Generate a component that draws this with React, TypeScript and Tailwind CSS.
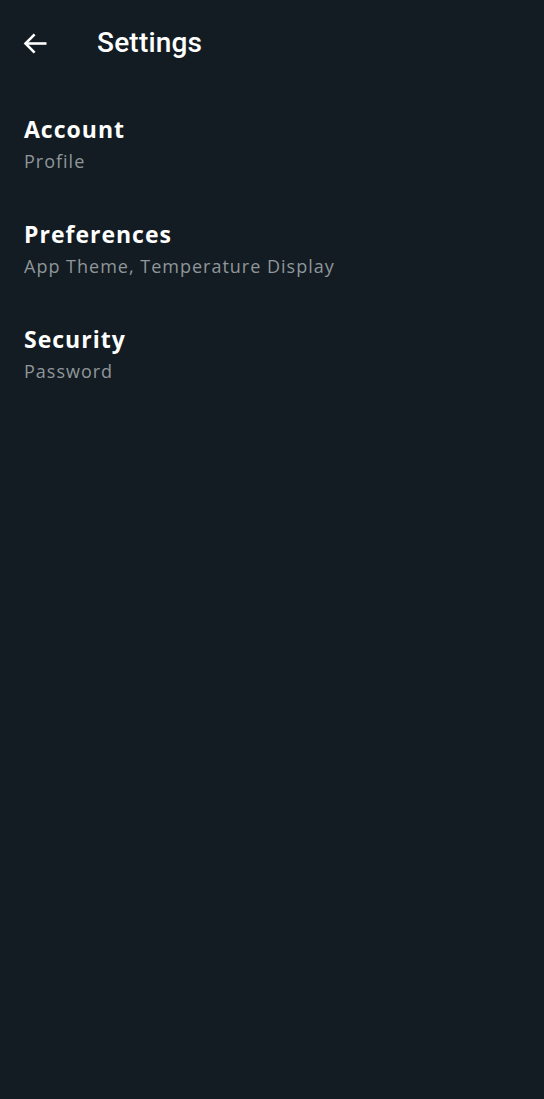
// ─── Data ─────────────────────────────────────────────────────────────────────

const sections = [
  { title: 'Account', subtitle: 'Profile' },
  { title: 'Preferences', subtitle: 'App Theme, Temperature Display' },
  { title: 'Security', subtitle: 'Password' },
]

// ─── Icons ────────────────────────────────────────────────────────────────────

function BackArrow() {
  return (
    <svg width="24" height="23" viewBox="0 0 24 23" fill="none" stroke="white" strokeWidth="2.6" strokeLinejoin="miter">
      <path d="M23.5 11.5H2.5" />
      <path d="M11.6 2.4L2.5 11.5L11.6 20.6" />
    </svg>
  )
}

// ─── Main Component ───────────────────────────────────────────────────────────

export default function App() {
  return (
    <div className="min-h-[1099px] w-full bg-[#121c22] text-white">
      {/* Top bar */}
      <div className="flex h-[86px] items-center pl-[23px] pr-6">
        <BackArrow />
        <h1 className="ml-[50px] text-[28px] font-medium font-['Roboto',sans-serif] leading-none tracking-[0.2px]">
          Settings
        </h1>
      </div>

      {/* Sections */}
      <div className="flex flex-col pt-[28px]">
        {sections.map(s => (
          <button key={s.title} className="flex h-[105px] flex-col items-start px-6 text-left font-['Open_Sans',sans-serif]">
            <span className="text-[23px] font-bold leading-[30px] tracking-[1px]">{s.title}</span>
            <span className="mt-[5px] text-[18px] leading-[24px] tracking-[1px] text-[#90969a]">
              {s.subtitle}
            </span>
          </button>
        ))}
      </div>
    </div>
  )
}
